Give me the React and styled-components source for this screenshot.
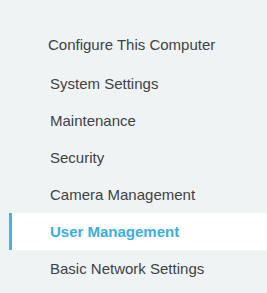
import React from "react";
import styled, { createGlobalStyle } from "styled-components";

const Global = createGlobalStyle`
  html, body {
    margin: 0;
    padding: 0;
    background: #f0f3f4;
  }
  body {
    font-family: "Liberation Sans", Arial, sans-serif;
  }
`;

const Sidebar = styled.nav`
  width: 267px;
  height: 293px;
  box-sizing: border-box;
  padding-top: 26px;
  background: #f0f3f4;
  overflow: hidden;
`;

const Heading = styled.div`
  height: 38px;
  line-height: 38px;
  padding-left: 48px;
  font-size: 15px;
  color: #3f4244;
`;

const List = styled.ul`
  list-style: none;
  margin: 1px 0 0 9px;
  padding: 0;
`;

const Item = styled.li`
  height: 37px;
  line-height: 37px;
  box-sizing: border-box;
  padding-left: 38px;
  border-left: 3px solid ${(p) => (p.$active ? "#45b3ea" : "transparent")};
  background: ${(p) => (p.$active ? "#ffffff" : "transparent")};
  font-size: 15px;
  font-weight: ${(p) => (p.$active ? 700 : 400)};
  color: ${(p) => (p.$active ? "#3aaee8" : "#3f4244")};
  white-space: nowrap;
`;

const items = [
  "System Settings",
  "Maintenance",
  "Security",
  "Camera Management",
  "User Management",
  "Basic Network Settings",
];

export default function App() {
  return (
    <>
      <Global />
      <Sidebar>
        <Heading>Configure This Computer</Heading>
        <List>
          {items.map((label) => (
            <Item key={label} $active={label === "User Management"}>
              {label}
            </Item>
          ))}
        </List>
      </Sidebar>
    </>
  );
}
